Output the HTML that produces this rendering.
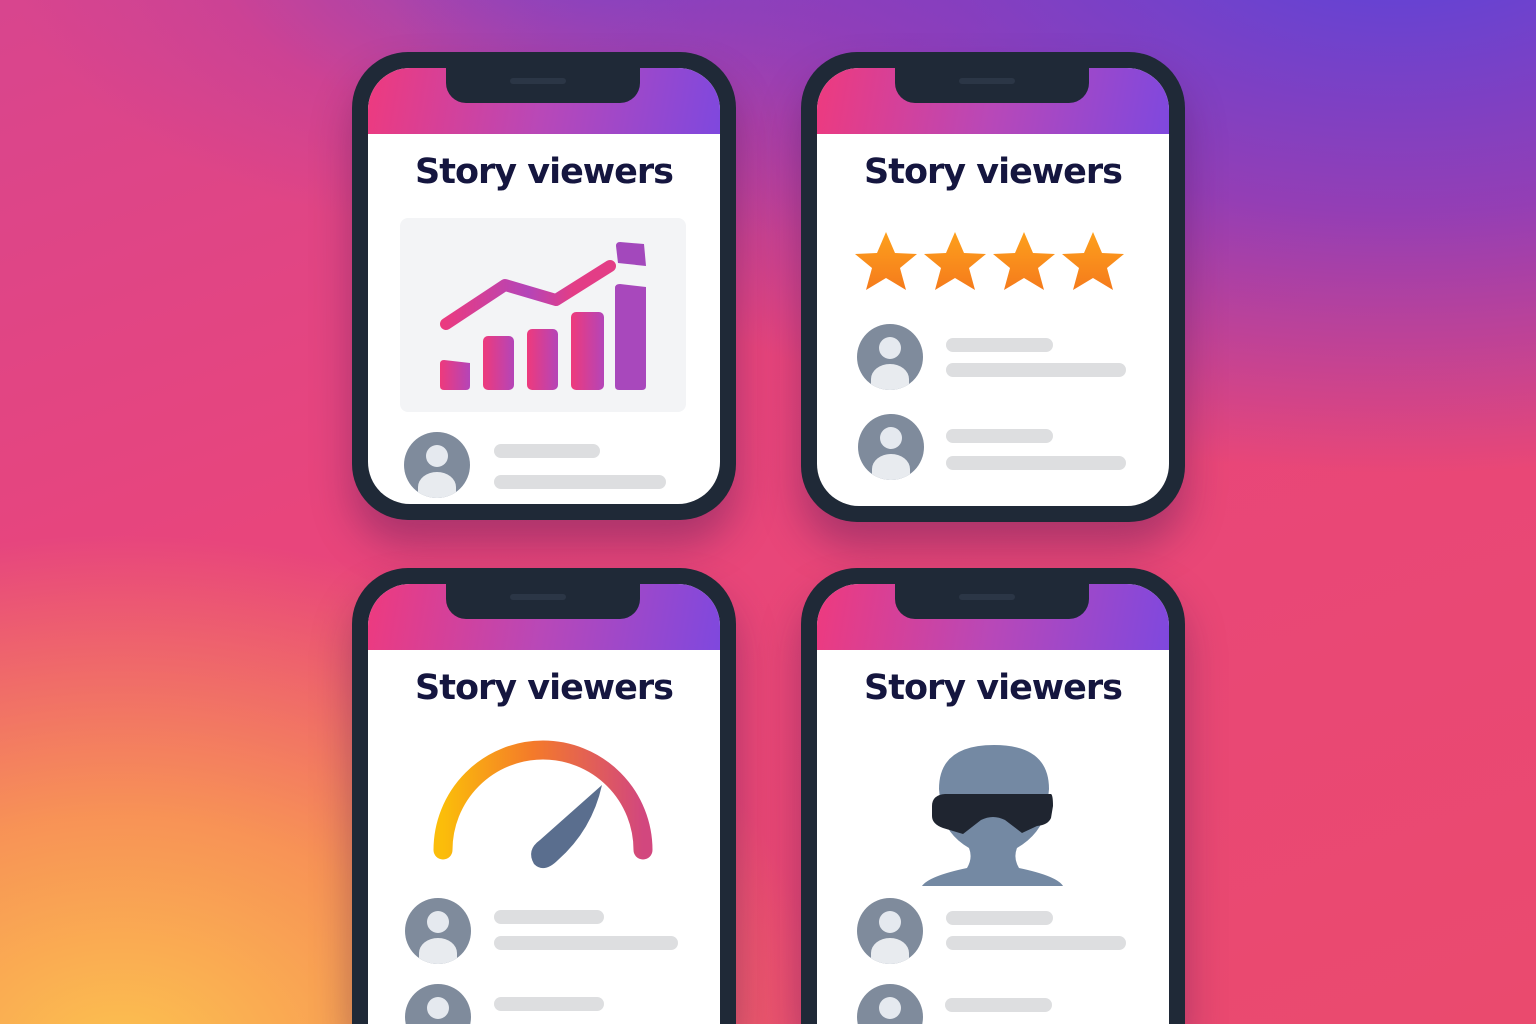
<!DOCTYPE html>
<html><head><meta charset="utf-8"><style>
*{margin:0;padding:0;box-sizing:border-box}
html,body{width:1536px;height:1024px;overflow:hidden}
body{position:relative;
background:
radial-gradient(ellipse 950px 700px at 120px 1060px,#fcc24f 0%,rgba(250,160,80,.85) 35%,rgba(240,110,100,0) 75%),
radial-gradient(ellipse 1200px 650px at 1400px -80px,#5744dc 0%,rgba(120,60,200,.75) 45%,rgba(200,60,150,0) 85%),
radial-gradient(ellipse 700px 350px at 600px -50px,rgba(110,70,210,.8) 0%,rgba(170,60,170,.3) 55%,rgba(230,60,120,0) 85%),
linear-gradient(160deg,#d8458e 0%,#e8457c 40%,#ea4a6e 100%);
font-family:"Liberation Sans",sans-serif}
.ph{position:absolute;width:384px;height:470px;background:#1f2937;border-radius:56px;padding:16px;box-shadow:0 25px 40px rgba(60,20,80,.35)}
.bt{border-radius:56px 56px 0 0;padding-bottom:0}
.bt .sc{border-radius:42px 42px 0 0}
.sc{position:relative;width:100%;height:100%;background:#fff;border-radius:42px;overflow:hidden}
.hd{position:absolute;left:0;top:0;width:100%;height:66px;background:linear-gradient(100deg,#ee3a7e 0%,#b848b8 50%,#7f48de 100%)}
.notch{position:absolute;left:78px;top:0;width:194px;height:35px;background:#1f2937;border-radius:0 0 20px 20px}
.notch:after{content:"";position:absolute;left:64px;top:10px;width:56px;height:6px;border-radius:3px;background:#2b3646}
.t{position:absolute;left:0;width:100%;top:84px;text-align:center;font-size:35px;font-weight:bold;color:#15163f;font-family:"DejaVu Sans","Liberation Sans",sans-serif;letter-spacing:-1px}
.av{position:absolute;width:66px;height:66px;border-radius:50%;background:#7f8b9c;overflow:hidden}
.av:before{content:"";position:absolute;left:22px;top:13px;width:22px;height:22px;border-radius:50%;background:#e5e9ef}
.av:after{content:"";position:absolute;left:14px;top:40px;width:38px;height:30px;border-radius:50% 50% 0 0;background:#e8ebef}
.l1,.l2{position:absolute;height:14px;border-radius:7px;background:#dddee0}
</style></head><body>

<div class="ph" style="left:352px;top:52px;height:468px"><div class="sc">
<div class="hd"></div><div class="notch"></div>
<div class="t">Story viewers</div>
<div style="position:absolute;left:32px;top:150px;width:286px;height:194px;background:#f3f4f6;border-radius:8px"></div>
<svg style="position:absolute;left:0;top:0" width="352" height="436">
<defs><linearGradient id="g1" x1="0" x2="1"><stop offset="0" stop-color="#ee3a7c"/><stop offset="1" stop-color="#b445b8"/></linearGradient>
<linearGradient id="g2" gradientUnits="userSpaceOnUse" x1="70" y1="0" x2="250" y2="0"><stop offset="0" stop-color="#ee3a7c"/><stop offset=".5" stop-color="#b445b8"/><stop offset=".75" stop-color="#e33d86"/><stop offset="1" stop-color="#e33d86"/></linearGradient></defs>
<path d="M72 296 Q72 292 76 292 L102 295 L102 318 Q102 322 98 322 L76 322 Q72 322 72 318Z" fill="url(#g1)"/>
<rect x="115" y="268" width="31" height="54" rx="5" fill="url(#g1)"/>
<rect x="159" y="261" width="31" height="61" rx="5" fill="url(#g1)"/>
<rect x="203" y="244" width="33" height="78" rx="5" fill="url(#g1)"/>
<path d="M247 220 Q247 216 252 216 L278 219 L278 318 Q278 322 274 322 L251 322 Q247 322 247 318Z" fill="#a848bc"/>
<path d="M248 178 Q248 174 252 174 L276 176 L278 198 L250 195Z" fill="#a348bc"/>
<path d="M78 256 L137 217 L188 232 L242 198" fill="none" stroke="url(#g2)" stroke-width="12" stroke-linecap="round" stroke-linejoin="round"/>
</svg>
<div class="av" style="left:36px;top:364px"></div>
<div class="l1" style="left:126px;top:376px;width:106px"></div>
<div class="l2" style="left:126px;top:407px;width:172px"></div>
</div></div>

<div class="ph" style="left:801px;top:52px"><div class="sc">
<div class="hd"></div><div class="notch"></div>
<div class="t">Story viewers</div>
<svg style="position:absolute;left:0;top:0" width="352" height="436">
<defs><linearGradient id="gs" x1="0" y1="0" x2="0" y2="1"><stop offset="0" stop-color="#fda01c"/><stop offset="1" stop-color="#f57b1c"/></linearGradient>
<path id="st" d="M0 -32 L9 -11 L31 -10 L14 4 L20 26 L0 14 L-20 26 L-14 4 L-31 -10 L-9 -11Z"/></defs>
<use href="#st" x="69" y="196" fill="url(#gs)"/>
<use href="#st" x="138" y="196" fill="url(#gs)"/>
<use href="#st" x="207" y="196" fill="url(#gs)"/>
<use href="#st" x="276" y="196" fill="url(#gs)"/>
</svg>
<div class="av" style="left:40px;top:256px"></div>
<div class="l1" style="left:129px;top:270px;width:107px"></div>
<div class="l2" style="left:129px;top:295px;width:180px"></div>
<div class="av" style="left:41px;top:346px"></div>
<div class="l1" style="left:129px;top:361px;width:107px"></div>
<div class="l2" style="left:129px;top:388px;width:180px"></div>
</div></div>

<div class="ph bt" style="left:352px;top:568px;height:456px"><div class="sc">
<div class="hd"></div><div class="notch"></div>
<div class="t">Story viewers</div>
<svg style="position:absolute;left:0;top:0" width="352" height="440">
<defs><linearGradient id="gg" x1="0" x2="1"><stop offset="0" stop-color="#fbbd0a"/><stop offset=".45" stop-color="#f47a2a"/><stop offset="1" stop-color="#d2477e"/></linearGradient></defs>
<path d="M75 266 A100 100 0 0 1 275 266" fill="none" stroke="url(#gg)" stroke-width="19" stroke-linecap="round"/>
<path d="M166 280 Q158 266 172 256 L234 201 Q224 246 190 276 Q176 290 166 280Z" fill="#5a6e8e"/>
</svg>
<div class="av" style="left:37px;top:314px"></div>
<div class="l1" style="left:126px;top:326px;width:110px"></div>
<div class="l2" style="left:126px;top:352px;width:184px"></div>
<div class="av" style="left:37px;top:400px"></div>
<div class="l1" style="left:126px;top:413px;width:110px"></div>
</div></div>

<div class="ph bt" style="left:801px;top:568px;height:456px"><div class="sc">
<div class="hd"></div><div class="notch"></div>
<div class="t">Story viewers</div>
<svg style="position:absolute;left:0;top:0" width="352" height="440">
<path d="M105 302 Q112 292 150 284 Q156 274 152 264 Q128 250 124 225 L122 205 Q122 161 177 161 Q232 161 232 205 L230 225 Q224 250 200 264 Q196 274 202 284 Q240 292 246 302Z" fill="#7489a3"/>
<path d="M115 222 Q115 211 128 210 L234 210 Q236 211 236 222 L234 234 Q231 241 220 242 L205 249 L188 236 Q176 230 164 236 L146 250 L126 244 Q115 240 115 232Z" fill="#1f2530"/>
</svg>
<div class="av" style="left:40px;top:314px"></div>
<div class="l1" style="left:129px;top:327px;width:107px"></div>
<div class="l2" style="left:129px;top:352px;width:180px"></div>
<div class="av" style="left:40px;top:400px"></div>
<div class="l1" style="left:128px;top:414px;width:107px"></div>
</div></div>

</body></html>
